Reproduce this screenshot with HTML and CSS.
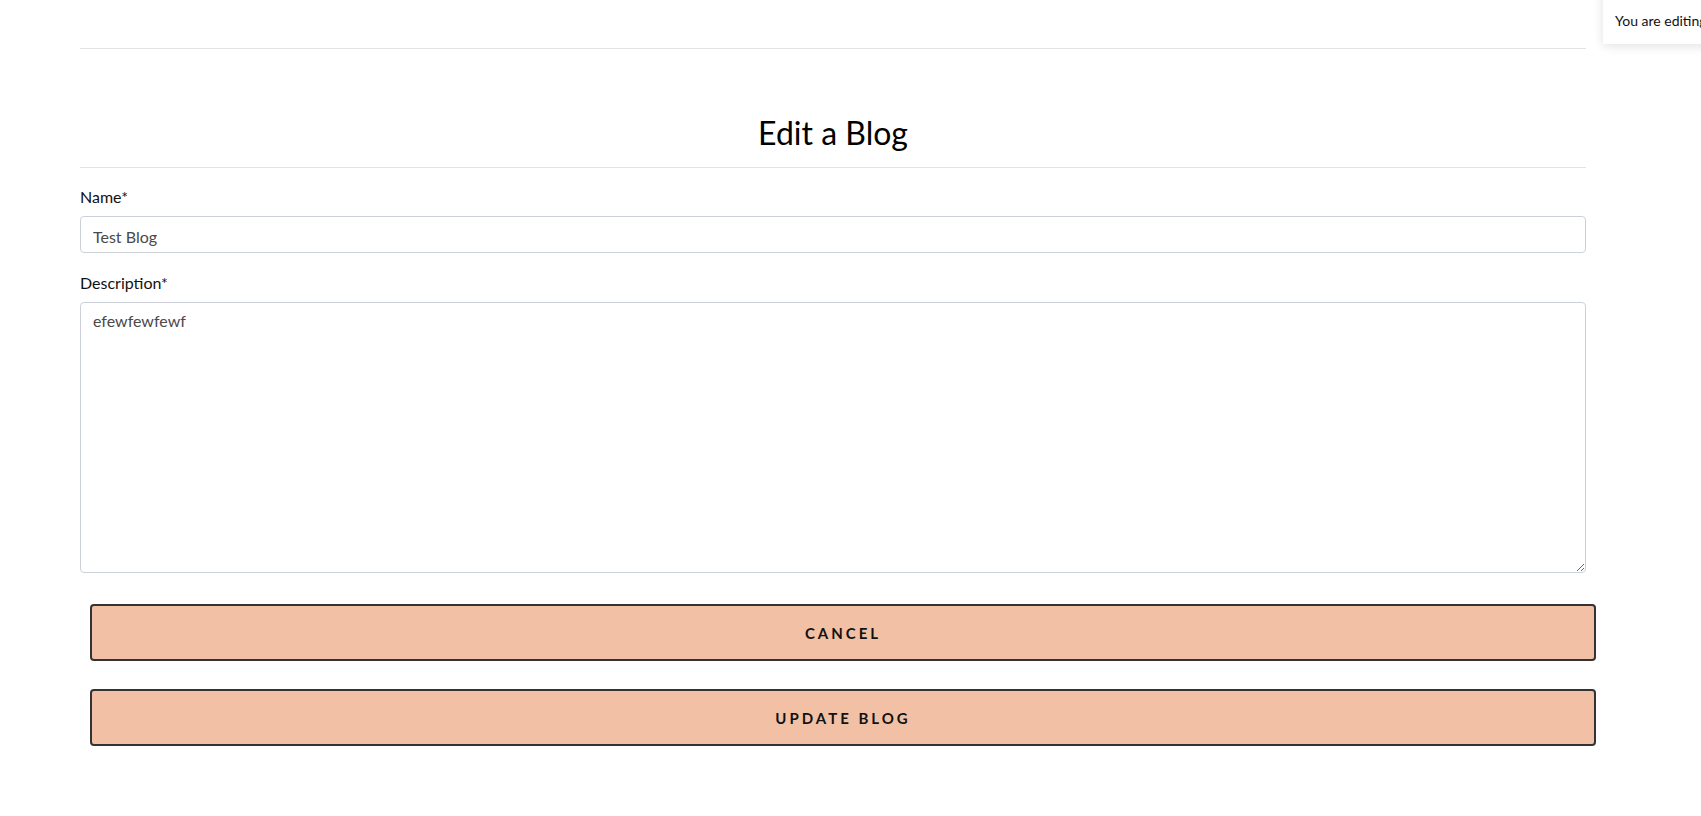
FILE: index.html
```html
<!DOCTYPE html>
<html lang="en">
<head>
<meta charset="utf-8">
<title>Edit a Blog</title>
<link rel="stylesheet" href="styles.css">
</head>
<body>
<div class="toast">You are editing Test Blog</div>
<div class="container">
  <header class="topbar"></header>
  <h1 class="title">Edit a Blog</h1>
  <form class="form">
    <label class="label" for="name">Name*</label>
    <input class="input" id="name" type="text" value="Test Blog">
    <label class="label" for="desc">Description*</label>
    <textarea class="textarea" id="desc">efewfewfewf</textarea>
    <div class="actions">
      <button type="button" class="btn">Cancel</button>
      <button type="submit" class="btn">Update Blog</button>
    </div>
  </form>
</div>
</body>
</html>
```
FILE: styles.css
```css
html, body {
  margin: 0;
  padding: 0;
  background: #fff;
  overflow-x: hidden;
}
body {
  font-family: Lato, "Liberation Sans", sans-serif;
  color: #111;
}
.container {
  margin-left: 80px;
  width: 1506px;
}
.topbar {
  height: 48px;
  border-bottom: 1px solid #e3e3e3;
}
.title {
  margin: 63px 0 0;
  padding-bottom: 13px;
  font-size: 32px;
  font-weight: 400;
  line-height: 42px;
  text-align: center;
  color: #000;
  border-bottom: 1px solid #e3e3e3;
}
.form {
  display: flex;
  flex-direction: column;
  padding-top: 20px;
}
.label {
  display: block;
  font-size: 16px;
  line-height: 18px;
  margin-bottom: 10px;
  color: #111;
}
.input {
  box-sizing: border-box;
  width: 100%;
  height: 37px;
  padding: 10px 12px 6px;
  margin: 0 0 21px;
  border: 1px solid #ccd1d9;
  border-radius: 4px;
  font-family: Lato, "Liberation Sans", sans-serif;
  font-size: 16px;
  color: #4a4a4a;
  outline: none;
}
.textarea {
  box-sizing: border-box;
  width: 100%;
  height: 271px;
  padding: 8px 12px;
  margin: 0;
  border: 1px solid #ccd1d9;
  border-radius: 4px;
  font-family: Lato, "Liberation Sans", sans-serif;
  font-size: 16px;
  line-height: 19px;
  color: #4a4a4a;
  outline: none;
}
.actions {
  display: flex;
  flex-direction: column;
  gap: 28px;
  margin: 31px -10px 0 10px;
}
.btn {
  box-sizing: border-box;
  height: 57px;
  width: 100%;
  background: #f2c1a5;
  border: 2px solid #333;
  border-radius: 4px;
  font-family: Lato, "Liberation Sans", sans-serif;
  font-size: 15px;
  font-weight: 700;
  letter-spacing: 3px;
  text-transform: uppercase;
  color: #111;
  cursor: pointer;
}
.toast {
  position: absolute;
  top: -10px;
  left: 1603px;
  width: 300px;
  padding: 23px 12px 15px;
  background: #fff;
  box-shadow: 0 2px 10px rgba(0, 0, 0, 0.12);
  font-size: 14px;
  line-height: 16px;
  color: #111;
  white-space: nowrap;
  z-index: 10;
}
```
